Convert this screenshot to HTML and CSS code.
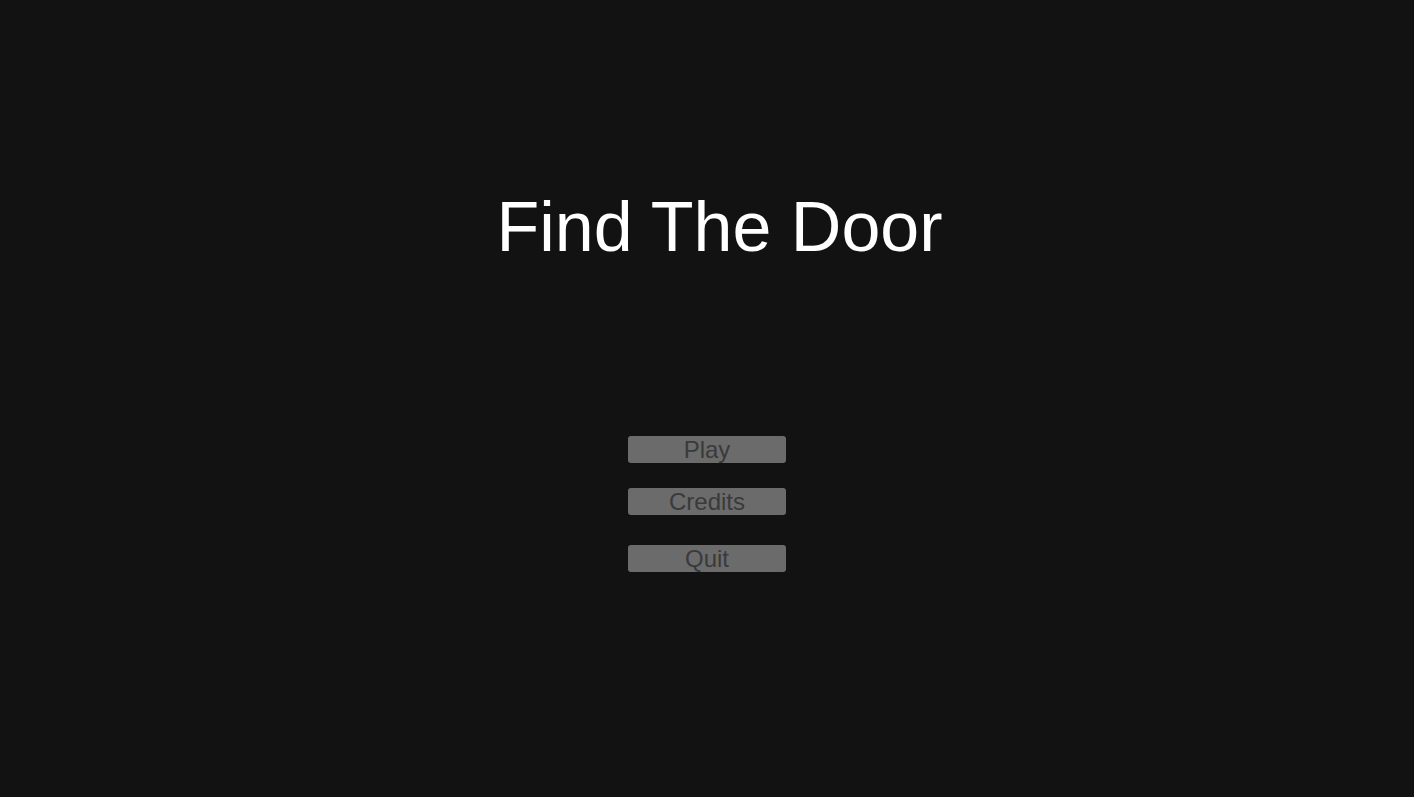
FILE: index.html
```html
<!DOCTYPE html>
<html>
<head>
<meta charset="utf-8">
<link rel="stylesheet" href="styles.css">
</head>
<body>
<main class="menu">
  <h1 class="title">Find The Door</h1>
  <div class="buttons">
    <button class="btn btn-play">Play</button>
    <button class="btn btn-credits">Credits</button>
    <button class="btn btn-quit">Quit</button>
  </div>
</main>
</body>
</html>
```
FILE: styles.css
```css
html, body {
  margin: 0;
  padding: 0;
  background: #121212;
  height: 100%;
}
body {
  font-family: "Liberation Sans", Arial, sans-serif;
}
.menu {
  display: flex;
  flex-direction: column;
  align-items: center;
  padding-top: 187px;
}
.title {
  margin: 0 0 0 25px;
  font-size: 70px;
  font-weight: normal;
  line-height: normal;
  color: #ffffff;
}
.buttons {
  display: flex;
  flex-direction: column;
  align-items: center;
  margin-top: 169px;
}
.btn {
  width: 158px;
  height: 27px;
  padding: 0;
  border: none;
  border-radius: 3px;
  background: #6b6b6b;
  color: #3a3a3a;
  font-family: "Liberation Sans", Arial, sans-serif;
  font-size: 24px;
  line-height: 27px;
  margin: 0;
}
.btn-credits {
  margin-top: 25px;
}
.btn-quit {
  margin-top: 30px;
}
```
